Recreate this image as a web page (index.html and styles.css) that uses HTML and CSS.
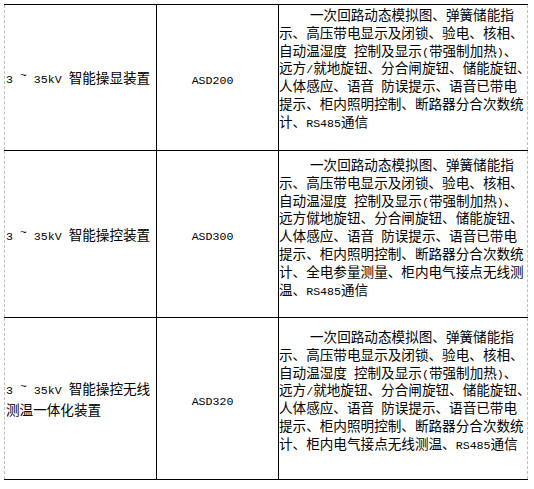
FILE: index.html
```html
<!DOCTYPE html>
<html lang="zh-CN">
<head>
<meta charset="utf-8">
<title>智能操控装置</title>
<link rel="stylesheet" href="styles.css">
</head>
<body>
<div class="page">
<table class="spec">
<colgroup><col class="c-name"><col class="c-model"><col class="c-desc"></colgroup>
<tbody>
<tr class="r1">
<td class="name"><div class="ln"><span class="lat">3 <span class="tl">~</span> 35kV </span>智能操显装置</div></td>
<td class="model"><span class="lat">ASD200</span></td>
<td class="desc">
<div class="ln first">一次回路动态模拟图、弹簧储能指</div>
<div class="ln">示、高压带电显示及闭锁、验电、核相、</div>
<div class="ln">自动温湿度<span class="lat"> </span>控制及显示<span class="lat">(</span>带强制加热<span class="lat">)</span>、</div>
<div class="ln">远方<span class="lat">/</span>就地旋钮、分合闸旋钮、储能旋钮、</div>
<div class="ln">人体感应、语音<span class="lat"> </span>防误提示、语音已带电</div>
<div class="ln">提示、柜内照明控制、断路器分合次数统</div>
<div class="ln">计、<span class="lat">RS485</span>通信</div>
</td>
</tr>
<tr class="r2">
<td class="name"><div class="ln"><span class="lat">3 <span class="tl">~</span> 35kV </span>智能操控装置</div></td>
<td class="model"><span class="lat">ASD300</span></td>
<td class="desc">
<div class="ln first">一次回路动态模拟图、弹簧储能指</div>
<div class="ln">示、高压带电显示及闭锁、验电、核相、</div>
<div class="ln">自动温湿度<span class="lat"> </span>控制及显示<span class="lat">(</span>带强制加热<span class="lat">)</span>、</div>
<div class="ln">远方僦地旋钮、分合闸旋钮、储能旋钮、</div>
<div class="ln">人体感应、语音<span class="lat"> </span>防误提示、语音已带电</div>
<div class="ln">提示、柜内照明控制、断路器分合次数统</div>
<div class="ln">计、全电参量测量、柜内电气接点无线测</div>
<div class="ln">温、<span class="lat">RS485</span>通信</div>
</td>
</tr>
<tr class="r3">
<td class="name"><div class="ln"><span class="lat">3 <span class="tl">~</span> 35kV </span>智能操控无线</div><div class="ln">测温一体化装置</div></td>
<td class="model"><span class="lat">ASD320</span></td>
<td class="desc">
<div class="ln first">一次回路动态模拟图、弹簧储能指</div>
<div class="ln">示、高压带电显示及闭锁、验电、核相、</div>
<div class="ln">自动温湿度<span class="lat"> </span>控制及显示<span class="lat">(</span>带强制加热<span class="lat">)</span>、</div>
<div class="ln">远方<span class="lat">/</span>就地旋钮、分合闸旋钮、储能旋钮、</div>
<div class="ln">人体感应、语音<span class="lat"> </span>防误提示、语音已带电</div>
<div class="ln">提示、柜内照明控制、断路器分合次数统</div>
<div class="ln">计、柜内电气接点无线测温、<span class="lat">RS485</span>通信</div>
</td>
</tr>
</tbody>
</table>
</div>
</body>
</html>
```

FILE: styles.css
```css
html, body {
  margin: 0;
  padding: 0;
  background: #fff;
}

.page {
  padding: 4px 0 0 4px;
}

.spec {
  border-collapse: collapse;
  table-layout: fixed;
  width: 523px;
  font-family: "Noto Sans CJK SC", sans-serif;
  font-size: 13.6px;
  color: #000;
}

.c-name { width: 152px; }
.c-model { width: 122px; }
.c-desc { width: 249px; }

.spec td {
  border: 1px solid #000;
  padding: 0;
  white-space: nowrap;
}

.ln {
  height: 17.8px;
  line-height: 17.8px;
}

.spec td.name {
  border-left: 1px dashed #bdbdbd;
  padding-left: 1px;
  vertical-align: middle;
}

.spec td.name .ln {
  height: 21px;
  line-height: 21px;
}

.spec td.model {
  text-align: center;
  vertical-align: middle;
  padding-right: 10px;
}

.spec td.desc {
  border-right: 1px dashed #bdbdbd;
  vertical-align: top;
}

.r1 { height: 146px; }
.r2 { height: 167px; }
.r3 { height: 162px; }

.r1 td.desc { padding-top: 1px; }
.r2 td.desc { padding-top: 5px; }
.r3 td.desc { padding-top: 10px; }

.ln.first {
  text-indent: 31px;
}

.lat {
  font-family: "Liberation Mono", monospace;
  font-size: 11.6px;
  line-height: 1;
}

.tl {
  vertical-align: 4px;
}
```
